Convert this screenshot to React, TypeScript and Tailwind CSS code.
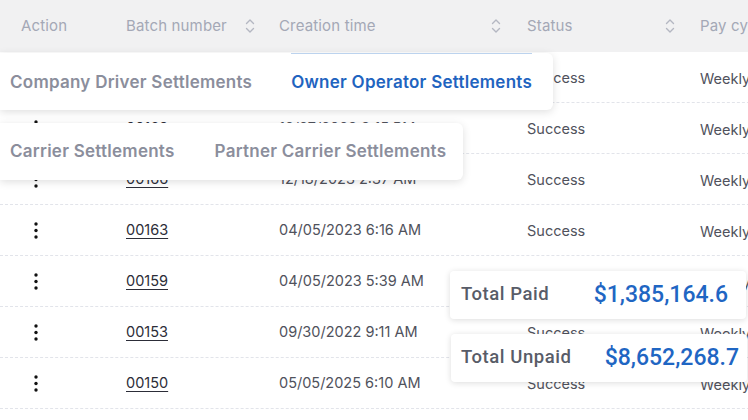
import React from 'react';

const rows = [
  { id: '00172', time: '01/09/2024 8:42 AM', status: 'Success', cycle: 'Weekly' },
  { id: '00169', time: '12/27/2023 3:15 PM', status: 'Success', cycle: 'Weekly' },
  { id: '00166', time: '12/18/2023 2:37 AM', status: 'Success', cycle: 'Weekly' },
  { id: '00163', time: '04/05/2023 6:16 AM', status: 'Success', cycle: 'Weekly' },
  { id: '00159', time: '04/05/2023 5:39 AM', status: 'Success', cycle: 'Weekly' },
  { id: '00153', time: '09/30/2022 9:11 AM', status: 'Success', cycle: 'Weekly' },
  { id: '00150', time: '05/05/2025 6:10 AM', status: 'Success', cycle: 'Weekly' },
];

const SortIcon = () => (
  <svg width="12" height="16" viewBox="0 0 12 16" fill="none" stroke="#b4b7c2" strokeWidth="1.4" strokeLinecap="round" strokeLinejoin="round">
    <path d="M2.5 5.5 6 2l3.5 3.5" />
    <path d="M2.5 10.5 6 14l3.5-3.5" />
  </svg>
);

const Kebab = () => (
  <svg width="4" height="17" viewBox="0 0 4 17" fill="#111">
    <circle cx="2" cy="2" r="1.7" />
    <circle cx="2" cy="8.5" r="1.7" />
    <circle cx="2" cy="15" r="1.7" />
  </svg>
);

export default function App() {
  return (
    <div className="relative w-[748px] h-[420px] overflow-hidden bg-white" style={{ fontFamily: 'Inter, "Noto Sans", sans-serif' }}>
      {/* Table */}
      <div className="w-[780px]">
        <div className="flex h-[52px] items-center bg-[#f1f1f2] rounded-tr-[12px] text-[15px] text-[#a4a8b6] tracking-[0.01em]">
          <div className="w-[105px] pl-[21px]">Action</div>
          <div className="w-[153px] pl-[21px] pr-[2px] flex items-center justify-between">
            Batch number <SortIcon />
          </div>
          <div className="w-[248px] pl-[21px] pr-[4px] flex items-center justify-between">
            Creation time <SortIcon />
          </div>
          <div className="w-[173px] pl-[21px] pr-[3px] flex items-center justify-between">
            Status <SortIcon />
          </div>
          <div className="flex-1 pl-[21px]">Pay cycle</div>
        </div>
        {rows.map((r) => (
          <div key={r.id} className="flex h-[51px] items-center border-b border-dashed border-[#e2e4ea] text-[14.5px] text-[#50525c]">
            <div className="w-[105px] pl-[34px] flex items-center">
              <Kebab />
            </div>
            <div className="w-[153px] pl-[21px] text-[#2c2d38] underline underline-offset-[3px]">{r.id}</div>
            <div className="w-[248px] pl-[21px]">{r.time}</div>
            <div className="w-[173px] pl-[21px] pt-[1px]">{r.status}</div>
            <div className="flex-1 pl-[21px] pt-[3px]">{r.cycle}</div>
          </div>
        ))}
      </div>

      {/* Settlement type tabs */}
      <div className="absolute left-0 top-[53px] h-[57px] flex items-center gap-[39px] pl-[10px] pr-[21px] pt-[2px] bg-white rounded-r-[6px] shadow-[0_2px_8px_rgba(0,0,0,0.13)] text-[17px] font-semibold tracking-[0.015em]">
        <span className="text-[#8b8e9c]">Company Driver Settlements</span>
        <span className="relative text-[#1f64c0]">
          Owner Operator Settlements
          <span className="absolute left-0 right-0 top-[-17px] h-px bg-[#bcd3ee]" />
        </span>
      </div>
      <div className="absolute left-0 top-[123px] h-[57px] flex items-center gap-[40px] pl-[10px] pr-[17px] bg-white rounded-r-[6px] shadow-[0_2px_8px_rgba(0,0,0,0.13)] text-[17px] font-semibold tracking-[0.015em] text-[#8b8e9c]">
        <span>Carrier Settlements</span>
        <span>Partner Carrier Settlements</span>
      </div>

      {/* Totals */}
      <div
        className="absolute left-[450px] top-[271px] w-[296px] h-[48px] flex items-center justify-between pl-[11px] pr-[18px] bg-white rounded-[4px] shadow-[0_1px_6px_rgba(0,0,0,0.14)]"
        style={{ fontFamily: 'Roboto, sans-serif' }}
      >
        <span className="text-[18.5px] font-medium tracking-[0.03em] text-[#585c68]">Total Paid</span>
        <span className="text-[23px] font-medium text-[#1f66c3]">$1,385,164.6</span>
      </div>
      <div
        className="absolute left-[451px] top-[334px] w-[296px] h-[48px] flex items-center justify-between pl-[10px] pr-[8px] bg-white rounded-[4px] shadow-[0_1px_6px_rgba(0,0,0,0.14)]"
        style={{ fontFamily: 'Roboto, sans-serif' }}
      >
        <span className="text-[18.5px] font-medium tracking-[0.03em] text-[#585c68]">Total Unpaid</span>
        <span className="text-[23px] font-medium text-[#1f66c3]">$8,652,268.7</span>
      </div>
    </div>
  );
}
